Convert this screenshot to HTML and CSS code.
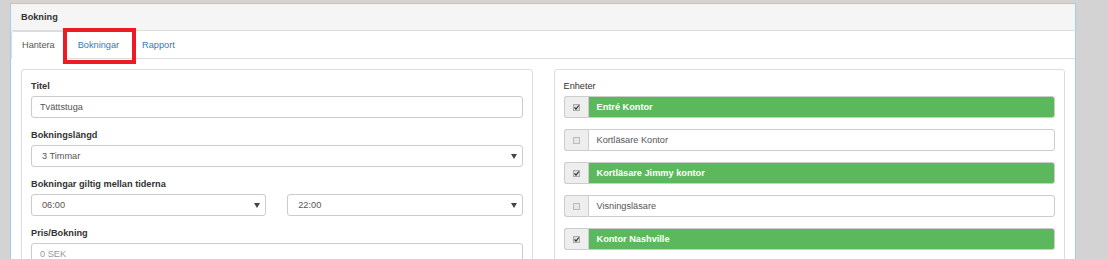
FILE: index.html
```html
<!DOCTYPE html>
<html lang="sv">
<head>
  <meta charset="UTF-8">
  <title>Bokning</title>
  <link rel="stylesheet" href="styles.css">
</head>
<body>
  <div class="panel">
    <div class="panel-heading">Bokning</div>

    <ul class="nav-tabs">
      <li class="active"><a>Hantera</a></li>
      <li><a>Bokningar</a></li>
      <li><a>Rapport</a></li>
    </ul>
    <div class="highlight"></div>

    <div class="tab-content">
      <div class="box">
        <div class="form-group">
          <label>Titel</label>
          <div class="input">Tvättstuga</div>
        </div>
        <div class="form-group">
          <label>Bokningslängd</label>
          <div class="input select">3 Timmar</div>
        </div>
        <div class="form-group">
          <label>Bokningar giltig mellan tiderna</label>
          <div class="row">
            <div class="input select">06:00</div>
            <div class="input select">22:00</div>
          </div>
        </div>
        <div class="form-group">
          <label>Pris/Bokning</label>
          <div class="input placeholder">0 SEK</div>
        </div>
      </div>

      <div class="box">
        <label class="plain">Enheter</label>
        <div class="units">
          <div class="input-group on">
            <span class="addon"><svg width="7" height="7" viewBox="0 0 7 7"><rect x="0.5" y="0.5" width="6" height="6" fill="#ddd" stroke="#aaa"/><path d="M1.5 3.5 L3 5 L5.8 1.5" fill="none" stroke="#333" stroke-width="1.2"/></svg></span>
            <span class="field">Entré Kontor</span>
          </div>
          <div class="input-group">
            <span class="addon"><svg width="7" height="7" viewBox="0 0 7 7"><rect x="0.5" y="0.5" width="6" height="6" fill="#e6e6e6" stroke="#bbb"/></svg></span>
            <span class="field">Kortläsare Kontor</span>
          </div>
          <div class="input-group on">
            <span class="addon"><svg width="7" height="7" viewBox="0 0 7 7"><rect x="0.5" y="0.5" width="6" height="6" fill="#ddd" stroke="#aaa"/><path d="M1.5 3.5 L3 5 L5.8 1.5" fill="none" stroke="#333" stroke-width="1.2"/></svg></span>
            <span class="field">Kortläsare Jimmy kontor</span>
          </div>
          <div class="input-group">
            <span class="addon"><svg width="7" height="7" viewBox="0 0 7 7"><rect x="0.5" y="0.5" width="6" height="6" fill="#e6e6e6" stroke="#bbb"/></svg></span>
            <span class="field">Visningsläsare</span>
          </div>
          <div class="input-group on">
            <span class="addon"><svg width="7" height="7" viewBox="0 0 7 7"><rect x="0.5" y="0.5" width="6" height="6" fill="#ddd" stroke="#aaa"/><path d="M1.5 3.5 L3 5 L5.8 1.5" fill="none" stroke="#333" stroke-width="1.2"/></svg></span>
            <span class="field">Kontor Nashville</span>
          </div>
        </div>
      </div>
    </div>
  </div>
</body>
</html>
```

FILE: styles.css
```css
body {
  margin: 0;
  background: #d3d3d3;
  font-family: "Liberation Sans", Arial, sans-serif;
  font-size: 9.2px;
  line-height: 14px;
  color: #333;
  overflow: hidden;
}
.panel {
  position: relative;
  width: 1064px;
  height: 300px;
  margin: 3px 0 0 10px;
  background: #fff;
  border: 1px solid #a3cdee;
}
.panel-heading {
  padding: 6px 10px;
  background: #f5f5f5;
  border-bottom: 1px solid #ddd;
  font-weight: bold;
}
.nav-tabs {
  display: flex;
  list-style: none;
  margin: 0;
  padding: 0;
  border-bottom: 1px solid #ddd;
}
.nav-tabs li {
  margin-right: 1px;
  margin-bottom: -1px;
}
.nav-tabs a {
  display: block;
  padding: 6px 10px;
  border: 1px solid transparent;
  border-radius: 3px 3px 0 0;
  color: #337ab7;
}
.nav-tabs .active a {
  color: #555;
  background: #fff;
  border-color: #ddd #ddd transparent;
}
.highlight {
  position: absolute;
  left: 52px;
  top: 24px;
  width: 65px;
  height: 28px;
  border: 4px solid #ed1c24;
}
.tab-content {
  display: grid;
  grid-template-columns: 1fr 1fr;
  gap: 21px;
  padding: 10px 10px 0;
}
.box {
  border: 1px solid #ddd;
  border-radius: 3px;
  padding: 9px;
  height: 300px;
}
.form-group {
  margin-bottom: 10px;
}
label {
  display: block;
  font-weight: bold;
  margin-bottom: 3px;
}
label.plain {
  font-weight: normal;
}
.input {
  position: relative;
  height: 20px;
  line-height: 20px;
  padding: 0 8px;
  border: 1px solid #ccc;
  border-radius: 3px;
  color: #555;
}
.select {
  padding-left: 10px;
}
.select::after {
  content: "";
  position: absolute;
  right: 5px;
  top: 8px;
  border-left: 3px solid transparent;
  border-right: 3px solid transparent;
  border-top: 5px solid #444;
}
.placeholder {
  color: #999;
}
.row {
  display: grid;
  grid-template-columns: 1fr 1fr;
  gap: 21px;
}
.units {
  display: flex;
  flex-direction: column;
  gap: 11px;
}
.input-group {
  display: flex;
  height: 22px;
}
.addon {
  display: flex;
  align-items: center;
  justify-content: center;
  width: 23px;
  background: #eee;
  border: 1px solid #ccc;
  border-right: 0;
  border-radius: 3px 0 0 3px;
}
.field {
  flex: 1;
  line-height: 20px;
  padding: 0 8px;
  border: 1px solid #ccc;
  border-radius: 0 3px 3px 0;
  color: #555;
}
.on .field {
  background: #5cb85c;
  color: #fff;
  font-weight: bold;
}
```
